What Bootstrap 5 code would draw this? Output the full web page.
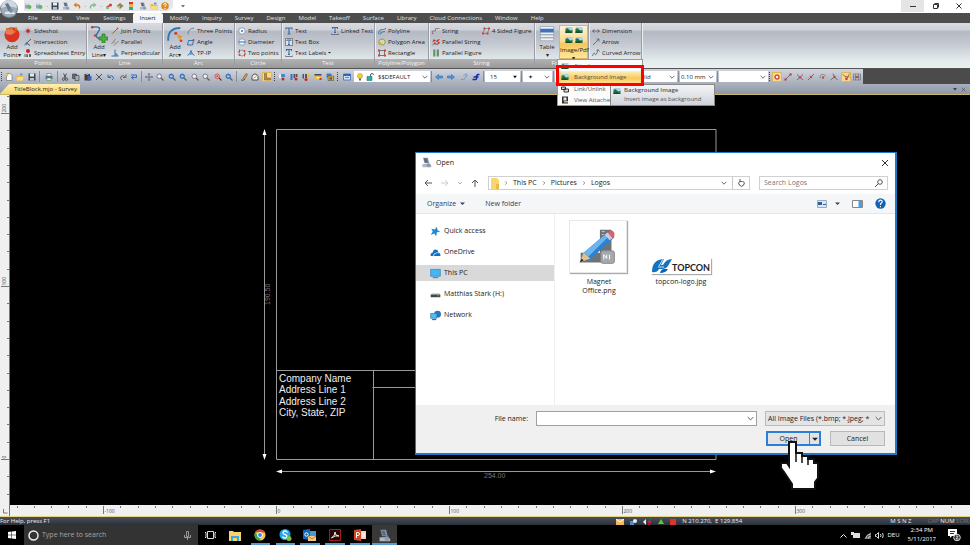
<!DOCTYPE html>
<html lang="en">
<head>
<meta charset="utf-8">
<meta name="viewport" content="width=device-width, initial-scale=1">
<title>TitleBlock.mjo - Survey</title>
<link href="https://cdn.jsdelivr.net/npm/bootstrap@5.3.0/dist/css/bootstrap.min.css" rel="stylesheet">
<style>
:root{--chev:url("data:image/svg+xml,%3Csvg xmlns='http://www.w3.org/2000/svg' viewBox='0 0 10 10'%3E%3Cpath d='M1 3l4 4 4-4' fill='none' stroke='%23555' stroke-width='1.4'/%3E%3C/svg%3E");
--tri:url("data:image/svg+xml,%3Csvg xmlns='http://www.w3.org/2000/svg' viewBox='0 0 10 10'%3E%3Cpath d='M2 3h6l-3 4z' fill='%23000'/%3E%3C/svg%3E")}
body{font-family:"Open Sans","Noto Sans",sans-serif;font-size:6px;line-height:8px;color:#222;background:#000}
svg{display:block;flex:none}
button{border:0;background:none;padding:0;color:inherit;font:inherit}
.ic{width:8px;height:8px}
.ic-md{width:11px;height:11px}
.ic-lg{width:18px;height:18px}
.titlebar{height:13px;background:#fff;padding-left:24px}
.quick{width:149px;height:11px;background:#e4e6ea;border-radius:0 0 6px 0}
.orb{left:0;top:0;width:19px;height:19px;z-index:3}
.winbtn{width:23px;height:12px}
.winbtn.lit{background:#e5e5e5}
.menubar{height:10px;background:#4d4d4d;padding-left:21px}
.menubar a{color:#e2e2e2;padding:0 7px;line-height:10px;text-decoration:none}
.menubar a.on{background:#f4f5f7;color:#222;border-radius:2px 2px 0 0}
.menubar a.on~a{padding-right:6px}
.ribbon{height:46px;background:linear-gradient(#d9dbdf 0,#ced1d8 15%,#b4b9c4 19%,#c3c7cf 45%,#e4eced 85%,#e8f0f0);border-bottom:1px solid #555}
.rgroup{border-right:1px solid #9a9da4;box-shadow:1px 0 #eceeef}
.rbody{height:36px;padding-top:2px}
.rlabel{height:9px;line-height:9px;background:linear-gradient(#b3b3b3,#989898);color:#f5f5f5;text-align:center}
.rgroup button{white-space:nowrap}
.small-cmd{height:11px;gap:2px}
.big-cmd{width:24px}
.pad-l{padding-left:3px}
.w-points{width:87px}.w-line{width:76px}.w-arc{width:72px}.w-circle{width:47px}.w-text{width:93px}.w-poly{width:54px}.w-string{width:106px}.w-format{width:54px}.w-dim{width:53px}
.col-half{width:46px}.col-wide{width:50px}
.img-cmd{width:29px;background:linear-gradient(#fdf3d8,#f9d98e 50%,#f6c65a 55%,#fde79c);border:1px solid #d7b66b}
.img-set{gap:2px;padding:0 4px 2px}
.tools{height:15px;background:#4b4b4b}
.strip{background:linear-gradient(#d0d4db,#bcc2cc 50%,#a7aebb)}
.seg3{width:35px}.seg1{width:15px}.seg7{width:81px}.seg8{width:92px}.seg5{width:60px}.seg4{width:49px}
.vsep{width:1px;height:11px;background:#868c98;margin:0 1px}
.grip{width:1px;height:9px;border-left:1px dotted #444;margin:0 1px}
.hot{background:#fbd78a;outline:1px solid #e2b45c}
.layer-box{padding-left:2px;gap:2px}
.tools .form-select{font-size:6px;line-height:8px;height:11px;min-height:0;border:0;border-radius:0;padding:0 8px 0 5px;background-color:#fff;background-image:var(--chev);background-size:6px 6px;background-position:right 2px center;color:#222;width:auto}
.tools .w-layer{width:54px;padding-left:2px}.tools .w-num{width:35px;background-image:var(--tri)}.tools .w-plus{width:29px}.tools .w-style{width:122px;padding-left:82px}.tools .w-mm{width:36px;padding-left:1px}.tools .w-fill{width:49px}
.tabs{height:11px;background:linear-gradient(#a9b0bc,#8f97a5);border-bottom:1px solid #c8b96a}
.doc-tab{width:80px;height:10px;line-height:10px;background:linear-gradient(#fff0b0,#fdd569);clip-path:polygon(9px 0,100% 0,100% 100%,0 100%);padding-left:14px}
.rule-v{width:10px;background:#f0f0f0;border-right:1px solid #777}
.rule-h{height:11px;background:#f0f0f0}
.status{height:9px;background:linear-gradient(#4a5060,#2b2f38);border-top:1px solid #e3d27c;color:#f0f0f0;line-height:9px;padding-top:1px}
.status-info{gap:6px;margin-right:148px}
.taskbar{height:20px;background:#000;color:#fff;font-size:7px;line-height:9px}
.taskbar .start{width:24px}
.search-box{width:174px;background:#333;padding:0 7px 0 4px;gap:3px}
.search-box input{font-size:7px;line-height:10px;background:none;border:0;padding:0;color:#aaa;min-width:0}
.search-box input::placeholder{color:#a5a5a5;opacity:1}
.apps{width:199px}
.apps button{flex:1;display:flex;align-items:center;justify-content:center;border-bottom:2px solid transparent;border-top:2px solid transparent}
.apps .run{border-image:linear-gradient(90deg,transparent 10%,#5b9bd5 10%,#5b9bd5 90%,transparent 90%) 0 0 2 0}
.apps .cur{background:#383838;border-bottom-color:#5b9bd5}
.tray{gap:4px;padding-right:9px;font-size:6px}
.drop{left:557px;top:59px;width:86px;z-index:5;background:#fbfbfb;border:1px solid #999;padding:0;color:#555}
.drop button{height:11px;width:100%;gap:5px;padding-left:3px;display:flex;align-items:center;white-space:nowrap}
.drop .sel{height:12px;background:linear-gradient(#fdf0c0,#f9c95a 60%,#fde18e)}
.redbox{left:556px;top:65px;width:88px;height:21px;border:3px solid #f00;z-index:7;pointer-events:none}
.tip-box{left:610px;top:84px;width:105px;z-index:6;background:linear-gradient(#f3f4f6,#cfd3dc);border:1px solid #888;color:#555;padding:1px 2px}
.tip-box div{gap:3px;line-height:9px}
.tip-text{padding-left:11px}
.dlg{left:415px;top:57px;width:482px;z-index:4;background:#fff;border:1px solid #1e7ac5;border-right-width:2px;border-bottom-width:2px;font-size:7px;line-height:10px;color:#222}
.dlg-title{height:19px;padding:0 6px 0 5px;gap:4px}
.dlg-nav{height:22px;padding:0 7px 0 8px;gap:9px}
.path-box{height:14px;border:1px solid #d0d0d0;gap:5px;padding-left:2px}
.find-box{width:129px;height:14px;border:1px solid #d0d0d0;padding:0 4px}
.find-box input{border:0;padding:0;min-width:0;background:none}
.find-box input::placeholder{color:#777;opacity:1}
.dlg-cmd{height:20px;background:#f4f6f8;border-bottom:1px solid #e4e6e8;color:#2a4264;padding:0 9px 0 11px}
.dlg-main{height:191px}
.side{width:139px;padding-top:9px;border-right:1px solid #f0f0f0}
.side a{display:flex;align-items:center;height:16px;margin-bottom:5px;padding-left:14px;gap:3px;color:#222;text-decoration:none}
.side a.on{background:#d9d9d9}
.files{padding:6px 0 0 14px;gap:22px}
.file-item{width:60px;text-align:center;line-height:9px;color:#222;text-decoration:none}
.thumb{width:58px;height:53px;border:1px solid #e8e8e8;box-shadow:1px 1px 1px #aaa;margin-bottom:4px}
.thumb-flat{width:60px;height:16px;box-shadow:1px 1px 1px #aaa;margin:38px 0 3px}
.logo-word{font:700 9px/9px Lato,sans-serif;fill:#222}
.dlg-foot{background:#f0f0f0;padding:6px 10px 7px 0;gap:5px}
.dlg-foot .form-control,.dlg-foot .form-select{font-size:7px;line-height:10px;height:15px;min-height:0;border:1px solid #a0a0a0;border-radius:0;padding:0 12px 0 2px;background:#fff var(--chev) no-repeat right 2px center/7px 7px;color:#222}
.dlg-foot .form-control{width:221px}
.dlg-foot .form-select{width:120px;background-color:#e4e4e4;border-color:#bbb}
.foot-btns{gap:9px}
.open-btn{width:55px;height:15px;background:#e4e4e4;border:2px solid #2a80d8}
.open-more{width:10px;border-left:1px solid #777;display:flex;align-items:center;justify-content:center}
.cancel-btn{width:55px;height:15px;background:#e1e1e1;border:1px solid #b8b8b8}
.hand{left:779px;top:345px;width:41px;height:51px;z-index:8}
.cad{font-family:"Liberation Sans",Arial,sans-serif;font-size:10px;fill:#eee}
.cad .dim{font-size:7px;fill:#777}
.tick-label{font-size:5px;fill:#555}
</style>
<script src="https://cdn.jsdelivr.net/npm/bootstrap@5.3.0/dist/js/bootstrap.bundle.min.js"></script>
</head>
<body class="d-flex flex-column vh-100 overflow-hidden position-relative">
<svg width="0" height="0" class="position-absolute" aria-hidden="true">
<symbol id="i-db" viewBox="0 0 16 16"><path d="M2 3h8v10H2z" fill="#8fa6bd"/><ellipse cx="6" cy="4" rx="4" ry="2" fill="#cfe0ee"/><circle cx="11" cy="10" r="4" fill="#5bb85b"/></symbol>
<symbol id="i-save" viewBox="0 0 16 16"><path d="M1 1h14v14H1z" fill="#3c4654"/><path d="M4 1h8v6H4z" fill="#e8edf2"/><path d="M4 10h8v5H4z" fill="#b8c3cf"/></symbol>
<symbol id="i-undo" viewBox="0 0 16 16"><path d="M5 6h4q5 0 4 7" fill="none" stroke="#dd7a1c" stroke-width="3"/><path d="M1 6l6-5v10z" fill="#dd7a1c"/></symbol>
<symbol id="i-redo" viewBox="0 0 16 16"><path d="M11 6H7q-5 0-4 7" fill="none" stroke="#7fc08a" stroke-width="3"/><path d="M15 6L9 1v10z" fill="#7fc08a"/></symbol>
<symbol id="i-pin" viewBox="0 0 16 16"><path d="M2 10l5-4 3 4z" fill="#b53"/><circle cx="11" cy="6" r="3" fill="#d33"/><path d="M2 12h6" stroke="#393" stroke-width="2"/></symbol>
<symbol id="i-diam" viewBox="0 0 16 16"><path d="M8 2l7 6-7 6-7-6z" fill="#6a9a55"/><path d="M8 2l7 6H8z" fill="#d66"/><path d="M1 8h7v6z" fill="#e5b84c"/></symbol>
<symbol id="i-light" viewBox="0 0 16 16"><path d="M4 0h8v5H4z" fill="#d33"/><path d="M4 5h8v5H4z" fill="#e9bd35"/><path d="M4 10h8v6H4z" fill="#3a9"/></symbol>
<symbol id="i-fold" viewBox="0 0 16 16"><path d="M1 4h5l2 2h7v9H1z" fill="#f0b93c"/><path d="M3 8h12l-2 7H1z" fill="#f9dc85"/><path d="M8 1h5v4H8z" fill="#58a0d8"/></symbol>
<symbol id="i-help" viewBox="0 0 16 16"><circle cx="8" cy="8" r="7.5" fill="#e08a12"/><path d="M5.500 6q0-3 2.500-3t2.500 2.500q0 1.500-2.500 3v1.500M8 12v2" stroke="#fff" stroke-width="2" fill="none"/></symbol>
<symbol id="i-helpb" viewBox="0 0 16 16"><circle cx="8" cy="8" r="7.500" fill="#0f62b5"/><path d="M5.500 6q0-3 2.500-3t2.500 2.500q0 1.500-2.500 3v1.500M8 11.500v2" stroke="#fff" stroke-width="1.700" fill="none"/></symbol>
<symbol id="i-scan" viewBox="0 0 16 16"><path d="M3 1h7l2 8H5z" fill="#8294a8"/><path d="M4 2h4l2 6H6z" fill="#5a6b80"/><path d="M2 10h10l3 2v3H2z" fill="#aeb9c6"/><circle cx="11" cy="12" r="3" fill="#8b9cb0"/></symbol>
<symbol id="i-addpt" viewBox="0 0 24 24"><circle cx="12" cy="13" r="10" fill="#d8341f"/><ellipse cx="9" cy="9" rx="6" ry="4" fill="#f0775f"/><path d="M4 4h3v3H4zM10 4h3v3h-3zM16 3h3v4h-3zM13 8h4v2h-4z" fill="#b98a1e"/></symbol>
<symbol id="i-side" viewBox="0 0 16 16"><path d="M8 1v14M1 8h14M3 3l10 10M13 3L3 13" stroke="#a77" stroke-width="1.300"/><circle cx="8" cy="8" r="3.500" fill="#c8202a"/></symbol>
<symbol id="i-inter" viewBox="0 0 16 16"><path d="M1 14L14 2M4 9l8 6" stroke="#3c536e" stroke-width="1.800" fill="none"/><path d="M1 12l5-2 1 4z" fill="#3c78b5"/></symbol>
<symbol id="i-sheet" viewBox="0 0 16 16"><circle cx="8" cy="4" r="4" fill="#c8202a"/><path d="M2 10v6M5 11h2v2H5v2h3M10 11h3v4h-3M10 13h3" stroke="#222" stroke-width="1.300" fill="none"/></symbol>
<symbol id="i-addline" viewBox="0 0 24 24"><path d="M3 3q14-2 8 6t2 9" fill="none" stroke="#33719f" stroke-width="1.800"/><circle cx="3" cy="3" r="1.800" fill="#d33"/><circle cx="7" cy="14" r="1.800" fill="#d33"/><path d="M16 12h4v4h4v4h-4v4h-4v-4h-4v-4h4z" fill="#49b03c" stroke="#2a7a23"/></symbol>
<symbol id="i-join" viewBox="0 0 16 16"><path d="M2 14L14 2" stroke="#476a92" stroke-width="1.800"/><circle cx="3" cy="13" r="2" fill="#e0a030"/><circle cx="13" cy="3" r="2" fill="#d55"/></symbol>
<symbol id="i-para" viewBox="0 0 16 16"><path d="M1 12L9 2M6 15l9-9" stroke="#6a7f98" stroke-width="1.800"/><circle cx="7" cy="9" r="2" fill="#e0a030"/></symbol>
<symbol id="i-perp" viewBox="0 0 16 16"><path d="M1 14h14M8 1v13M8 10h4v4" stroke="#2f62a0" stroke-width="1.800" fill="none"/></symbol>
<symbol id="i-addarc" viewBox="0 0 24 24"><path d="M3 21Q2 4 19 4" fill="none" stroke="#2f78b8" stroke-width="2.500"/><path d="M7 21Q6 8 19 8" fill="none" stroke="#9cc0de"/><circle cx="13" cy="11" r="2" fill="#d33"/><path d="M14 12l8 3-4 5z" fill="#e49a22"/><circle cx="20" cy="21" r="1.800" fill="#d33"/></symbol>
<symbol id="i-arc3" viewBox="0 0 16 16"><path d="M2 15Q2 3 14 2" fill="none" stroke="#667c96" stroke-width="1.800"/></symbol>
<symbol id="i-angle" viewBox="0 0 16 16"><path d="M3 5h10l-2 9H1z" fill="none" stroke="#2467b3" stroke-width="1.800"/><circle cx="13" cy="4" r="2" fill="#d33"/></symbol>
<symbol id="i-tp" viewBox="0 0 16 16"><path d="M1 13Q7 10 8 3q1 7 7 10M5 10h6" fill="none" stroke="#2467b3" stroke-width="1.800"/></symbol>
<symbol id="i-rad" viewBox="0 0 16 16"><circle cx="8" cy="8" r="6.500" fill="#f5f8fb" stroke="#7f8b99" stroke-width="1.500"/><circle cx="8" cy="8" r="2" fill="#347cc4"/></symbol>
<symbol id="i-dia" viewBox="0 0 16 16"><circle cx="8" cy="8" r="6.500" fill="#f5f8fb" stroke="#7f8b99" stroke-width="1.500"/><path d="M1 8h14" stroke="#2467b3" stroke-width="2"/></symbol>
<symbol id="i-two" viewBox="0 0 16 16"><circle cx="8" cy="8" r="6" fill="none" stroke="#888" stroke-width="1.500"/><path d="M3 1v5H0M13 15v-5h3" stroke="#d04040" stroke-width="2" fill="none"/><circle cx="3" cy="12" r="2" fill="#d04040"/><circle cx="13" cy="4" r="2" fill="#d04040"/></symbol>
<symbol id="i-T" viewBox="0 0 16 16"><path d="M2 5V2h12v3M8 2v12M5 14h6" fill="none" stroke="#3a6ba8" stroke-width="2.400"/></symbol>
<symbol id="i-Tb" viewBox="0 0 16 16"><path d="M1 1h14v14H1z" fill="#dce6f0" stroke="#555" stroke-width="1.300"/><path d="M4 6V4h8v2M8 4v9M6 13h4" fill="none" stroke="#3a6ba8" stroke-width="2"/></symbol>
<symbol id="i-Tl" viewBox="0 0 16 16"><path d="M3 4V1h10v3M8 1v10M6 11h4" fill="none" stroke="#3a6ba8" stroke-width="2.200"/><path d="M1 15h14M1 13v2M15 13v2" stroke="#555" stroke-width="1.400"/></symbol>
<symbol id="i-poly" viewBox="0 0 16 16"><path d="M1 14Q2 5 9 5t6-3M4 15q2-6 10-6" fill="none" stroke="#4a83ad" stroke-width="2.200"/></symbol>
<symbol id="i-parea" viewBox="0 0 16 16"><path d="M4 3l7-1 4 6-4 6-7-1-3-5z" fill="#cdddb0" stroke="#7d8f3a" stroke-width="1.500"/><circle cx="4" cy="11" r="3" fill="#e6a52e"/></symbol>
<symbol id="i-rect" viewBox="0 0 16 16"><path d="M3 3h10v10H3z" fill="none" stroke="#555" stroke-width="1.500"/><path d="M0 1h4v4H0zM12 1h4v4h-4zM0 11h4v4H0zM12 11h4v4h-4z" fill="#d04040"/></symbol>
<symbol id="i-str" viewBox="0 0 16 16"><path d="M1 13V8h6V3h8" fill="none" stroke="#777" stroke-width="1.600"/><circle cx="1.500" cy="13" r="1.500" fill="#d55"/></symbol>
<symbol id="i-pstr" viewBox="0 0 16 16"><path d="M1 8q4-6 7-2t7-4M1 14q4-6 7-2t7-4" fill="none" stroke="#444" stroke-width="1.500"/><circle cx="4" cy="5" r="2.200" fill="#d33"/><circle cx="12" cy="5" r="2.200" fill="#d33"/><circle cx="6" cy="11" r="2.200" fill="#d33"/><circle cx="13" cy="10" r="2.200" fill="#d33"/></symbol>
<symbol id="i-pfig" viewBox="0 0 16 16"><path d="M4 1v14M11 1v14" stroke="#4fa03c" stroke-width="3"/><path d="M6 1v14M13 1v14" stroke="#355" stroke-width="1"/></symbol>
<symbol id="i-four" viewBox="0 0 16 16"><path d="M5 3h9l-3 10H2z" fill="none" stroke="#777" stroke-width="1.400"/><path d="M3 1h4v4H3zM12 1h4v4h-4zM0 11h4v4H0zM9 11h4v4H9z" fill="#d04040"/></symbol>
<symbol id="i-table" viewBox="0 0 24 24"><path d="M3 2h18v19H3z" fill="#edf0f4" stroke="#9aa3ae"/><path d="M3 5h18v5H3z" fill="#3c72c0"/><path d="M3 13h18M3 17h18" stroke="#8d959f" stroke-width="1.500"/></symbol>
<symbol id="i-img" viewBox="0 0 16 16"><path d="M1 2h14v12H1z" fill="#a9d4f0"/><path d="M1 6q4-3 7 1t7 0v7H1z" fill="#25733b"/><path d="M1 11l7-1 7 4H1z" fill="#1d4d28"/></symbol>
<symbol id="i-dim" viewBox="0 0 16 16"><path d="M1 8h14M5 5L1 8l4 3M11 5l4 3-4 3" fill="none" stroke="#555" stroke-width="1.500"/></symbol>
<symbol id="i-arrow" viewBox="0 0 16 16"><path d="M2 14L14 2M9 2h5v5" fill="none" stroke="#4d5868" stroke-width="1.500"/></symbol>
<symbol id="i-carrow" viewBox="0 0 16 16"><path d="M1 14q3-9 5-4t6-8M9 4l3-3 3 4" fill="none" stroke="#4d5868" stroke-width="1.500"/></symbol>
<symbol id="i-new" viewBox="0 0 16 16"><path d="M3 1h7l4 4v10H3z" fill="#fff" stroke="#667" stroke-width="1.300"/><circle cx="4" cy="4" r="3" fill="#f0c040"/></symbol>
<symbol id="i-print" viewBox="0 0 16 16"><path d="M4 1h8v5H4z" fill="#fff" stroke="#556"/><path d="M1 6h14v6H1z" fill="#5c7690"/><path d="M4 10h8v5H4z" fill="#dff0df" stroke="#484"/></symbol>
<symbol id="i-cut" viewBox="0 0 16 16"><path d="M5 1l5 9M11 1L6 10" stroke="#333" stroke-width="1.600"/><circle cx="5" cy="12.500" r="2.300" fill="none" stroke="#333" stroke-width="1.500"/><circle cx="11" cy="12.500" r="2.300" fill="none" stroke="#333" stroke-width="1.500"/></symbol>
<symbol id="i-copy" viewBox="0 0 16 16"><path d="M1 2h8v9H1z" fill="#6c7178" stroke="#222"/><path d="M6 5h8v10H6z" fill="#a7adb4" stroke="#222"/></symbol>
<symbol id="i-paste" viewBox="0 0 16 16"><path d="M1 2h11v13H1z" fill="#4a3c20"/><path d="M4 1h5v3H4z" fill="#999"/><path d="M7 6h8v9H7z" fill="#3c62b4"/></symbol>
<symbol id="i-x" viewBox="0 0 16 16"><path d="M2 2l12 12M14 2L2 14" stroke="#333" stroke-width="1.600"/></symbol>
<symbol id="i-un2" viewBox="0 0 16 16"><path d="M2 3v6h6M3 8q4-5 9-1 3 4-2 7" fill="none" stroke="#2c6fc7" stroke-width="2"/></symbol>
<symbol id="i-re2" viewBox="0 0 16 16"><path d="M14 3v6H8M13 8Q9 3 4 7q-3 4 2 7" fill="none" stroke="#666" stroke-width="2"/></symbol>
<symbol id="i-re3" viewBox="0 0 16 16"><path d="M2 4h11v5H3M3 9l4-3M3 9l4 4" fill="none" stroke="#2c6fc7" stroke-width="2"/></symbol>
<symbol id="i-pan" viewBox="0 0 16 16"><path d="M8 1v14M1 8h14M6 3l2-2 2 2M6 13l2 2 2-2M3 6L1 8l2 2M13 6l2 2-2 2" fill="none" stroke="#556" stroke-width="1.400"/></symbol>
<symbol id="i-zoom" viewBox="0 0 16 16"><circle cx="6.500" cy="6.500" r="4.500" fill="#e8f0f8" stroke="#667" stroke-width="1.600"/><path d="M10 10l5 5" stroke="#8a4a28" stroke-width="2.200"/></symbol>
<symbol id="i-zoomb" viewBox="0 0 16 16"><circle cx="6.500" cy="6.500" r="4.500" fill="#4d91dd" stroke="#2a5faa" stroke-width="1.600"/><path d="M4 6.500h5" stroke="#fff" stroke-width="1.500"/><path d="M10 10l5 5" stroke="#555" stroke-width="2.200"/></symbol>
<symbol id="i-zoomr" viewBox="0 0 16 16"><circle cx="6.500" cy="6.500" r="4.500" fill="#f7dcd8" stroke="#b33" stroke-width="1.600"/><path d="M4 6.500h5M6.500 4v5" stroke="#c22" stroke-width="1.500"/><path d="M10 10l5 5" stroke="#8a2a28" stroke-width="2.200"/></symbol>
<symbol id="i-pen" viewBox="0 0 16 16"><path d="M2 14q5 2 8-2" fill="none" stroke="#333" stroke-width="1.500"/><path d="M6 11L12 1l3 2-6 10z" fill="#e4ad3f" stroke="#333"/></symbol>
<symbol id="i-gauge" viewBox="0 0 16 16"><path d="M2 14V7q2-6 8-5l4 5v7z" fill="#f2f2ee" stroke="#333" stroke-width="1.600"/><path d="M5 11l6-5" stroke="#b80" stroke-width="1.600"/></symbol>
<symbol id="i-elbow" viewBox="0 0 16 16"><path d="M3 1h4v9h8v4H3z" fill="#c98a22" stroke="#664" stroke-width="1.200"/></symbol>
<symbol id="i-pts" viewBox="0 0 16 16"><path d="M2 2h12v6H2z" fill="#4b86cf"/><path d="M2 2h4v8H2z" fill="#e6edf6"/><circle cx="10" cy="12" r="3" fill="#c22"/></symbol>
<symbol id="i-pts2" viewBox="0 0 16 16"><path d="M1 2h4v12H1z" fill="#3f72bd"/><path d="M7 2h3v8H7zM11 2h4v6h-4z" fill="#50565f"/><circle cx="12" cy="12" r="3" fill="#c22"/></symbol>
<symbol id="i-pts3" viewBox="0 0 16 16"><path d="M1 2h3v9H1zM6 2h4v8H6z" fill="#50565f"/><path d="M12 2h3v6h-3z" fill="#e5b93a"/><circle cx="8" cy="13" r="3" fill="#c22"/></symbol>
<symbol id="i-yel" viewBox="0 0 16 16"><path d="M1 2h14v12H1z" fill="#e5b93a"/><path d="M1 2h14v3H1z" fill="#3a4c66"/><path d="M5 8h6v3H5z" fill="#fff0a8"/><path d="M11 10h4v4h-4z" fill="#c33"/></symbol>
<symbol id="i-view" viewBox="0 0 16 16"><path d="M2 1h12v14H2z" fill="#333"/><path d="M5 3h6v6H5z" fill="#dfe6ee"/><path d="M6 10h8v3H6z" fill="#e5b93a"/></symbol>
<symbol id="i-layers" viewBox="0 0 16 16"><path d="M1 1h10v8H1z" fill="#3f7fd0"/><path d="M4 6h11v9H4z" fill="#e5a93a" stroke="#345"/><path d="M7 9h5v4H7z" fill="#356"/></symbol>
<symbol id="i-win" viewBox="0 0 16 16"><path d="M1 2h14v12H1z" fill="#cfe3fa" stroke="#2f66b5" stroke-width="1.500"/><path d="M1 2h14v4H1z" fill="#2f66b5"/><path d="M4 9h8" stroke="#2f66b5" stroke-width="1.500"/></symbol>
<symbol id="i-bulb" viewBox="0 0 16 16"><circle cx="8" cy="6" r="5" fill="#f3d328" stroke="#a98a10"/><path d="M6 11h4v4H6z" fill="#666"/></symbol>
<symbol id="i-lock" viewBox="0 0 16 16"><path d="M9 8V4q0-3 3-3t3 3" fill="none" stroke="#444" stroke-width="1.700"/><path d="M2 7h10v8H2z" fill="#21b3b3" stroke="#166"/></symbol>
<symbol id="i-left" viewBox="0 0 16 16"><path d="M1 8l6-5v3h8v4H7v3z" fill="#4b9be0" stroke="#245d9c"/></symbol>
<symbol id="i-right" viewBox="0 0 16 16"><path d="M15 8L9 3v3H1v4h8v3z" fill="#4b9be0" stroke="#245d9c"/></symbol>
<symbol id="i-dots" viewBox="0 0 16 16"><path d="M2 13q9 1 10-8M8 5l4-4 3 5" fill="none" stroke="#4b84c0" stroke-width="2" stroke-dasharray="2 1"/></symbol>
<symbol id="i-wave" viewBox="0 0 16 16"><path d="M1 13h6q3 0 2-4T12 3h3M3 8h10" fill="none" stroke="#1429b8" stroke-width="2.800"/></symbol>
<symbol id="i-sn1" viewBox="0 0 16 16"><circle cx="8" cy="8" r="4" fill="#fff" stroke="#c33" stroke-width="2.500"/></symbol>
<symbol id="i-sn2" viewBox="0 0 16 16"><path d="M3 13L13 3" stroke="#555" stroke-width="1.500"/><circle cx="3" cy="13" r="2.500" fill="#c44"/><circle cx="13" cy="3" r="2.500" fill="#c44"/></symbol>
<symbol id="i-sn3" viewBox="0 0 16 16"><path d="M2 3l12 11M14 3L2 14" stroke="#555" stroke-width="1.500"/><circle cx="8" cy="8.500" r="2.500" fill="#c44"/></symbol>
<symbol id="i-sn4" viewBox="0 0 16 16"><path d="M2 14L14 2" stroke="#555" stroke-width="1.500"/><circle cx="8" cy="8" r="2.500" fill="#c44"/></symbol>
<symbol id="i-sn5" viewBox="0 0 16 16"><path d="M2 11Q1 2 9 3l5 3" fill="none" stroke="#777" stroke-width="1.500"/><circle cx="8" cy="9" r="2.500" fill="#c44"/></symbol>
<symbol id="i-sn6" viewBox="0 0 16 16"><path d="M6 1l3 7 6 6M9 8l-8 6" fill="none" stroke="#555" stroke-width="1.500"/><circle cx="9" cy="8" r="2.500" fill="#c44"/></symbol>
<symbol id="i-sn7" viewBox="0 0 16 16"><path d="M1 3l6 4 2 6 6-12M7 7l8 1" fill="none" stroke="#755" stroke-width="1.500"/><circle cx="9" cy="12" r="2.500" fill="#c44"/></symbol>
<symbol id="i-grid" viewBox="0 0 16 16"><path d="M1 2h14v12H1zM1 8h14M5 2v12M11 2v12" fill="none" stroke="#666" stroke-width="1.200"/><circle cx="8" cy="8" r="2.500" fill="#c44"/></symbol>
<symbol id="i-link" viewBox="0 0 16 16"><path d="M1 4h8v5H1zM6 8h9v6H6z" fill="#ddd" stroke="#222" stroke-width="1.800"/></symbol>
<symbol id="i-star" viewBox="0 0 16 16"><path d="M10 1l1 5 4 2-5 1-1 6-3-4-5 2 3-5-2-4 5 1z" fill="#1e88d8"/></symbol>
<symbol id="i-cloud" viewBox="0 0 16 16"><path d="M1 13q-1-4 3-5Q5 2 9 4q3 0 3 4 4 1 3 5z" fill="#0f6fc6"/><path d="M5 13q0-4 4-4 2-2 4 0" fill="none" stroke="#fff" stroke-width="1"/></symbol>
<symbol id="i-pc" viewBox="0 0 16 16"><path d="M1 2h14v10H1z" fill="#47b4f5" stroke="#2a82bd"/><path d="M4 14h8" stroke="#678" stroke-width="1.500"/></symbol>
<symbol id="i-drive" viewBox="0 0 16 16"><path d="M1 8l2-2h10l2 2z" fill="#c5c8ca"/><path d="M1 8h14v4H1z" fill="#444"/><path d="M11 9.500h2v1h-2z" fill="#6f6"/></symbol>
<symbol id="i-net" viewBox="0 0 16 16"><circle cx="11" cy="6" r="5" fill="#2b77b8"/><path d="M1 5h9v7H1z" fill="#53bdf5" stroke="#2377ad"/><path d="M3 14h6" stroke="#456" stroke-width="1.500"/></symbol>
<symbol id="i-chev" viewBox="0 0 10 10"><path d="M1 3l4 4 4-4" fill="none" stroke="#555" stroke-width="1.500"/></symbol>
<symbol id="i-caret" viewBox="0 0 10 10"><path d="M0 3h10L5 8z" fill="currentColor"/></symbol>
<symbol id="i-gt" viewBox="0 0 10 10"><path d="M3 1l4 4-4 4" fill="none" stroke="#444" stroke-width="1.500"/></symbol>
</svg>

<header>
<div class="titlebar d-flex align-items-start justify-content-between">
 <div class="quick d-flex align-items-center justify-content-between pe-1">
  <svg class="ic"><use href="#i-db"/></svg><svg class="ic"><use href="#i-db"/></svg><span>·</span><svg class="ic"><use href="#i-save"/></svg><svg class="ic"><use href="#i-scan"/></svg><svg class="ic"><use href="#i-undo"/></svg><span>·</span><svg class="ic"><use href="#i-redo"/></svg><span>·</span><svg class="ic"><use href="#i-pin"/></svg><svg class="ic"><use href="#i-diam"/></svg><svg class="ic"><use href="#i-light"/></svg><svg class="ic"><use href="#i-scan"/></svg><svg class="ic"><use href="#i-fold"/></svg><svg class="ic"><use href="#i-help"/></svg>
 </div>
 <svg class="ms-2 mt-1" width="4" height="4" color="#555"><use href="#i-caret"/></svg>
 <div class="d-flex ms-auto">
  <button class="winbtn lit" aria-label="Minimize"><svg class="m-auto" width="6" height="6"><path d="M0 3.500h6" stroke="#333"/></svg></button>
  <button class="winbtn" aria-label="Restore"><svg class="m-auto" width="6" height="6"><path d="M.5 1.500h4v4h-4zM1.500 .500h4v4" fill="none" stroke="#333"/></svg></button>
  <button class="winbtn" aria-label="Close"><svg class="m-auto" width="6" height="6"><path d="M.5.5l5 5M5.500.5l-5 5" stroke="#333"/></svg></button>
 </div>
</div>
<svg class="orb position-absolute" viewBox="0 0 19 19"><circle cx="9" cy="9" r="9" fill="#76818e"/><circle cx="9" cy="9" r="8" fill="#9eabb9"/><path d="M1 8a8 8 0 0 1 16 0Q9 5 1 8z" fill="#cfd8e0"/><path d="M5 4l3-1 4 7-3 2z" fill="#65758a"/><path d="M5 12l6-1 4 2v1H5z" fill="#e1e7ed"/><path d="M10 8l3 2-1 3-3-1z" fill="#7b8fa8"/></svg>
<nav class="menubar d-flex">
 <a href="#">File</a><a href="#">Edit</a><a href="#">View</a><a href="#">Settings</a><a href="#" class="on">Insert</a><a href="#">Modify</a><a href="#">Inquiry</a><a href="#">Survey</a><a href="#">Design</a><a href="#">Model</a><a href="#">Takeoff</a><a href="#">Surface</a><a href="#">Library</a><a href="#">Cloud Connections</a><a href="#">Window</a><a href="#">Help</a>
</nav>
<div class="ribbon d-flex">
 <section class="rgroup w-points"><div class="rbody d-flex">
  <button class="big-cmd"><svg class="ic-lg mx-auto"><use href="#i-addpt"/></svg>Add<br>Point▾</button>
  <div><button class="small-cmd d-flex align-items-center"><svg class="ic"><use href="#i-side"/></svg>Sideshot</button><button class="small-cmd d-flex align-items-center"><svg class="ic"><use href="#i-inter"/></svg>Intersection</button><button class="small-cmd d-flex align-items-center"><svg class="ic"><use href="#i-sheet"/></svg>Spreadsheet Entry</button></div>
 </div><div class="rlabel">Points</div></section>
 <section class="rgroup w-line"><div class="rbody d-flex">
  <button class="big-cmd"><svg class="ic-lg mx-auto"><use href="#i-addline"/></svg>Add<br>Line▾</button>
  <div><button class="small-cmd d-flex align-items-center"><svg class="ic"><use href="#i-join"/></svg>Join Points</button><button class="small-cmd d-flex align-items-center"><svg class="ic"><use href="#i-para"/></svg>Parallel</button><button class="small-cmd d-flex align-items-center"><svg class="ic"><use href="#i-perp"/></svg>Perpendicular</button></div>
 </div><div class="rlabel">Line</div></section>
 <section class="rgroup w-arc"><div class="rbody d-flex">
  <button class="big-cmd"><svg class="ic-lg mx-auto"><use href="#i-addarc"/></svg>Add<br>Arc▾</button>
  <div><button class="small-cmd d-flex align-items-center"><svg class="ic"><use href="#i-arc3"/></svg>Three Points</button><button class="small-cmd d-flex align-items-center"><svg class="ic"><use href="#i-angle"/></svg>Angle</button><button class="small-cmd d-flex align-items-center"><svg class="ic"><use href="#i-tp"/></svg>TP-IP</button></div>
 </div><div class="rlabel">Arc</div></section>
 <section class="rgroup w-circle"><div class="rbody pad-l">
  <button class="small-cmd d-flex align-items-center"><svg class="ic"><use href="#i-rad"/></svg>Radius</button><button class="small-cmd d-flex align-items-center"><svg class="ic"><use href="#i-dia"/></svg>Diameter</button><button class="small-cmd d-flex align-items-center"><svg class="ic"><use href="#i-two"/></svg>Two points</button>
 </div><div class="rlabel">Circle</div></section>
 <section class="rgroup w-text"><div class="rbody pad-l d-flex">
  <div class="col-half"><button class="small-cmd d-flex align-items-center"><svg class="ic"><use href="#i-T"/></svg>Text</button><button class="small-cmd d-flex align-items-center"><svg class="ic"><use href="#i-Tb"/></svg>Text Box</button><button class="small-cmd d-flex align-items-center"><svg class="ic"><use href="#i-Tl"/></svg>Text Labels <svg width="3" height="3"><use href="#i-caret"/></svg></button></div>
  <div><button class="small-cmd d-flex align-items-center"><svg class="ic"><use href="#i-Tl"/></svg>Linked Text</button></div>
 </div><div class="rlabel">Text</div></section>
 <section class="rgroup w-poly"><div class="rbody pad-l">
  <button class="small-cmd d-flex align-items-center"><svg class="ic"><use href="#i-poly"/></svg>Polyline</button><button class="small-cmd d-flex align-items-center"><svg class="ic"><use href="#i-parea"/></svg>Polygon Area</button><button class="small-cmd d-flex align-items-center"><svg class="ic"><use href="#i-rect"/></svg>Rectangle</button>
 </div><div class="rlabel">Polyline/Polygon</div></section>
 <section class="rgroup w-string"><div class="rbody pad-l d-flex">
  <div class="col-wide"><button class="small-cmd d-flex align-items-center"><svg class="ic"><use href="#i-str"/></svg>String</button><button class="small-cmd d-flex align-items-center"><svg class="ic"><use href="#i-pstr"/></svg>Parallel String</button><button class="small-cmd d-flex align-items-center"><svg class="ic"><use href="#i-pfig"/></svg>Parallel Figure</button></div>
  <div><button class="small-cmd d-flex align-items-center"><svg class="ic"><use href="#i-four"/></svg>4 Sided Figure</button></div>
 </div><div class="rlabel">String</div></section>
 <section class="rgroup w-format"><div class="rbody d-flex">
  <button class="big-cmd"><svg class="ic-lg mx-auto"><use href="#i-table"/></svg>Table<br>▾</button>
  <button class="img-cmd"><span class="img-set d-flex flex-wrap justify-content-center"><svg class="ic"><use href="#i-img"/></svg><svg class="ic"><use href="#i-img"/></svg><svg class="ic"><use href="#i-img"/></svg><svg class="ic"><use href="#i-img"/></svg></span>Image/Pdf<br>▾</button>
 </div><div class="rlabel">Format</div></section>
 <section class="rgroup w-dim"><div class="rbody pad-l">
  <button class="small-cmd d-flex align-items-center"><svg class="ic"><use href="#i-dim"/></svg>Dimension</button><button class="small-cmd d-flex align-items-center"><svg class="ic"><use href="#i-arrow"/></svg>Arrow</button><button class="small-cmd d-flex align-items-center"><svg class="ic"><use href="#i-carrow"/></svg>Curved Arrow</button>
 </div></section>
</div>
<div class="tools d-flex"><div class="strip d-flex align-items-center">
 <span class="grip"></span>
 <div class="seg3 d-flex justify-content-around"><svg class="ic"><use href="#i-new"/></svg><svg class="ic"><use href="#i-fold"/></svg><svg class="ic"><use href="#i-save"/></svg></div><span class="vsep"></span>
 <div class="seg1 d-flex justify-content-around"><svg class="ic"><use href="#i-print"/></svg></div><span class="vsep"></span>
 <div class="seg7 d-flex justify-content-around"><svg class="ic"><use href="#i-cut"/></svg><svg class="ic"><use href="#i-copy"/></svg><svg class="ic"><use href="#i-paste"/></svg><svg class="ic"><use href="#i-x"/></svg><svg class="ic"><use href="#i-un2"/></svg><svg class="ic"><use href="#i-re2"/></svg><svg class="ic"><use href="#i-re3"/></svg></div><span class="vsep"></span>
 <div class="seg8 d-flex justify-content-around"><svg class="ic"><use href="#i-pan"/></svg><svg class="ic"><use href="#i-zoom"/></svg><svg class="ic"><use href="#i-zoomb"/></svg><svg class="ic"><use href="#i-zoomb"/></svg><svg class="ic"><use href="#i-zoom"/></svg><svg class="ic"><use href="#i-zoom"/></svg><svg class="ic"><use href="#i-zoomr"/></svg><svg class="ic"><use href="#i-zoomb"/></svg></div><span class="vsep"></span>
 <div class="seg3 d-flex justify-content-around"><svg class="ic"><use href="#i-pen"/></svg><svg class="ic"><use href="#i-gauge"/></svg><svg class="ic hot"><use href="#i-elbow"/></svg></div><span class="grip"></span>
 <div class="seg5 d-flex justify-content-around"><svg class="ic"><use href="#i-pts"/></svg><svg class="ic"><use href="#i-pts2"/></svg><svg class="ic"><use href="#i-pts3"/></svg><svg class="ic"><use href="#i-yel"/></svg><svg class="ic"><use href="#i-layers"/></svg></div><span class="grip"></span>
 <div class="seg1 d-flex justify-content-around"><svg class="ic"><use href="#i-win"/></svg></div>
 <div class="layer-box d-flex align-items-center bg-white"><svg class="ic"><use href="#i-bulb"/></svg><svg class="ic"><use href="#i-lock"/></svg><select class="form-select w-layer" aria-label="Layer"><option>$$DEFAULT</option></select></div><span class="vsep"></span>
 <div class="seg4 d-flex justify-content-around"><svg class="ic"><use href="#i-left"/></svg><svg class="ic"><use href="#i-right"/></svg><svg class="ic"><use href="#i-dots"/></svg><svg class="ic"><use href="#i-wave"/></svg></div><span class="vsep"></span>
 <select class="form-select w-num" aria-label="Text size"><option>15</option></select><span class="vsep"></span>
 <select class="form-select w-plus" aria-label="Point symbol"><option>✦</option></select><span class="vsep"></span>
 <select class="form-select w-style" aria-label="Line style"><option>Solid</option></select><span class="vsep"></span>
 <select class="form-select w-mm" aria-label="Line width"><option>0.10 mm</option></select><span class="vsep"></span>
 <select class="form-select w-fill" aria-label="Fill"><option></option></select><span class="grip"></span>
 <div class="seg8 d-flex justify-content-around"><svg class="ic hot"><use href="#i-sn1"/></svg><svg class="ic"><use href="#i-sn2"/></svg><svg class="ic"><use href="#i-sn3"/></svg><svg class="ic"><use href="#i-sn4"/></svg><svg class="ic"><use href="#i-sn5"/></svg><svg class="ic"><use href="#i-sn6"/></svg><svg class="ic hot"><use href="#i-sn7"/></svg><svg class="ic"><use href="#i-grid"/></svg></div>
</div></div>
<div class="tabs d-flex justify-content-between align-items-center"><div class="doc-tab">TitleBlock.mjo - Survey</div><div class="d-flex gap-1 pe-1"><svg width="4" height="4"><use href="#i-caret"/></svg><svg width="5" height="5"><use href="#i-x"/></svg></div></div>
</header>

<div class="drop position-absolute"><button><svg class="ic"><use href="#i-img"/></svg>Attach</button><button class="sel"><svg class="ic"><use href="#i-img"/></svg>Background Image</button><button><svg class="ic"><use href="#i-link"/></svg>Link/Unlink</button><button><svg class="ic"><use href="#i-view"/></svg>View Attached</button></div>
<div class="redbox position-absolute"></div>
<div class="tip-box position-absolute" role="tooltip"><div class="d-flex fw-semibold align-items-center"><svg class="ic"><use href="#i-img"/></svg>Background Image</div><div class="tip-text">Insert image as background</div></div>

<main class="flex-grow-1 d-flex position-relative overflow-hidden">
 <svg class="rule-v h-100" id="ruleV"></svg>
 <svg class="flex-grow-1 h-100 cad" aria-label="Title block drawing">
  <g fill="none" stroke="#999"><path d="M266.500 34.500h439.500v330h-439.500zM266.500 275.500h439M363.500 275v89M362.500 292.500h343"/><path d="M254.500 36v327M268 376.500h436"/></g>
  <path d="M254.500 34l2 6h-4zM254.500 365l2-6h-4zM266 376.500l6-2v4zM706 376.500l-6-2v4z" fill="#fff"/>
  <text x="269" y="287">Company Name</text><text x="269" y="298">Address Line 1</text><text x="269" y="310">Address Line 2</text><text x="269" y="321">City, State, ZIP</text>
  <text class="dim" transform="translate(260 210) rotate(-90)">190.50</text><text class="dim" x="474" y="383">254.00</text>
 </svg>

 <section class="dlg position-absolute" role="dialog" aria-label="Open">
  <div class="dlg-title d-flex align-items-center"><svg class="ic-md"><use href="#i-scan"/></svg><span>Open</span><button class="ms-auto" aria-label="Close"><svg width="8" height="8"><path d="M1 1l6 6M7 1L1 7" stroke="#333"/></svg></button></div>
  <div class="dlg-nav d-flex align-items-center">
   <svg width="8" height="8" viewBox="0 0 8 8"><path d="M8 4H1M4 1L1 4l3 3" fill="none" stroke="#555"/></svg>
   <svg width="8" height="8" viewBox="0 0 8 8"><path d="M0 4h7M4 1l3 3-3 3" fill="none" stroke="#ccc"/></svg>
   <svg width="4" height="4"><use href="#i-chev"/></svg>
   <svg class="me-n1" width="8" height="8" viewBox="0 0 8 8"><path d="M4 8V1M1 4l3-3 3 3" fill="none" stroke="#555"/></svg>
   <div class="path-box d-flex align-items-center flex-grow-1"><svg width="8" height="11" viewBox="0 0 8 11"><path d="M0 0h6l2 2v9H0z" fill="#f7d774"/><path d="M5 6h3v5H5z" fill="#e8bb45"/></svg><svg width="4" height="4"><use href="#i-gt"/></svg>This PC<svg width="4" height="4"><use href="#i-gt"/></svg>Pictures<svg width="4" height="4"><use href="#i-gt"/></svg>Logos<svg class="ms-auto" width="6" height="6"><use href="#i-chev"/></svg><span class="vr"></span><svg class="me-1" width="7" height="8" viewBox="0 0 7 8"><path d="M5 2.200A2.700 2.700 0 1 1 2 2.200M2 0v2.500H4.500" fill="none" stroke="#555"/></svg></div>
   <div class="find-box d-flex align-items-center"><input class="flex-grow-1" type="text" placeholder="Search Logos" aria-label="Search Logos"><svg width="8" height="8" viewBox="0 0 8 8"><circle cx="5" cy="3" r="2.300" fill="none" stroke="#555"/><path d="M3.500 4.500L0 8" stroke="#555"/></svg></div>
  </div>
  <div class="dlg-cmd d-flex align-items-center"><button class="d-flex align-items-center gap-1">Organize <svg width="5" height="5"><use href="#i-caret"/></svg></button><button class="ms-3 ps-1">New folder</button>
   <div class="ms-auto d-flex align-items-center gap-2"><svg width="10" height="8" viewBox="0 0 10 8"><path d="M.5.5h9v7h-9z" fill="#d8e8f5" stroke="#9ab"/><path d="M1 2h4v3H1zM6 4h3v1H6z" fill="#2a60a5"/></svg><svg width="5" height="5"><use href="#i-caret"/></svg><svg class="ms-1 me-1" width="11" height="8" viewBox="0 0 11 8"><path d="M.5.5h10v7H.5z" fill="#fff" stroke="#888"/><path d="M6.500 1H10v6H6.500z" fill="#4a9fe0"/></svg><svg class="ic-md"><use href="#i-helpb"/></svg></div></div>
  <div class="dlg-main d-flex">
   <nav class="side"><a href="#"><svg class="ic-md"><use href="#i-star"/></svg>Quick access</a><a href="#"><svg class="ic-md"><use href="#i-cloud"/></svg>OneDrive</a><a href="#" class="on"><svg class="ic-md"><use href="#i-pc"/></svg>This PC</a><a href="#"><svg class="ic-md"><use href="#i-drive"/></svg>Matthias Stark (H:)</a><a href="#"><svg class="ic-md"><use href="#i-net"/></svg>Network</a></nav>
   <div class="files d-flex align-items-start">
    <a href="#" class="file-item"><svg class="thumb" viewBox="0 0 58 53"><path d="M31 9h12v34H11V33h20z" fill="#6e7378"/><path d="M33 11h3M33 14h2M33 17h3" stroke="#ccc"/><path d="M10 43l4-10 26-22 6 6-24 22z" fill="#2a82d4"/><path d="M14 33L38 13l3 2-22 22z" fill="#6db5ee"/><path d="M38 13l4-3q5 0 4 6l-3 3z" fill="#d9636a"/><path d="M36 14l3-2 5 6-3 2z" fill="#ccd"/><path d="M10 43l4-10 7 6z" fill="#e5c08a"/><path d="M10 43l2-4 2 2z" fill="#222"/><rect x="32" y="31" width="14" height="13" rx="2" fill="#a5a9ad" stroke="#888"/><path d="M35 40v-5l3 4v-4M41 35v5" stroke="#fff" fill="none"/></svg>Magnet<br>Office.png</a>
    <a href="#" class="file-item"><svg class="thumb-flat" viewBox="0 0 60 16"><path d="M1 14Q1 2 12 1h1l-3 6h2q3-6 9-6l-4 7q-2 3-6 3H8q-2 4-7 3z" fill="#1273c4"/><path d="M9 15q1-4 4-4h4q-2 4-8 4z" fill="#0e62ad"/><path d="M7 9h6M12 1L8 8" stroke="#fff" stroke-width=".8"/><text x="21" y="13" class="logo-word">TOPCON</text></svg>topcon-logo.jpg</a>
   </div>
  </div>
  <div class="dlg-foot d-flex flex-column align-items-end">
   <div class="d-flex align-items-center gap-2"><label for="fname" class="me-n1">File name:</label><input id="fname" class="form-control" type="text"><select class="form-select" aria-label="File type"><option>All Image Files (*.bmp; *.jpeg; *</option></select></div>
   <div class="foot-btns d-flex"><div class="open-btn d-flex"><button class="flex-grow-1">Open</button><button class="open-more" aria-label="Open options"><svg width="6" height="6"><use href="#i-caret"/></svg></button></div><button class="cancel-btn">Cancel</button></div>
  </div>
 </section>
 <svg class="hand position-absolute" viewBox="0 0 41 51"><path d="M10 2h7v11h6v3h6v3h6v4h4v15l-3 4v7H13v-5l-4-6-4-6-3-4v-5h6l2 3z" fill="#fff" stroke="#111" stroke-width="2"/><path d="M17 13v9M23 16v7M29 19v6" stroke="#111" stroke-width="1.500"/></svg>
</main>
<svg class="rule-h w-100" id="ruleH"></svg>
<footer>
 <div class="status d-flex align-items-center"><span class="me-auto">For Help, press F1</span>
  <div class="status-info d-flex align-items-center"><svg width="8" height="6" viewBox="0 0 8 6"><path d="M0 0h8v6H0z" fill="#f0b860"/><path d="M0 0l4 3 4-3" fill="none" stroke="#fff"/></svg><svg width="7" height="6" viewBox="0 0 7 6"><path d="M0 2h4v4H0z" fill="#4b90d5"/><circle cx="5" cy="2" r="2" fill="#eee"/></svg><svg width="9" height="6" viewBox="0 0 9 6"><path d="M0 3l3-3v6z" fill="#eee"/><path d="M8 0L5 3h3L5 6" stroke="#e22" fill="none"/></svg><svg width="6" height="5" viewBox="0 0 6 5"><path d="M0 5l3-5 3 5z" fill="#5c3"/></svg><svg width="6" height="6"><path d="M0 0h6v6H0z" fill="#d33"/></svg><span>N 210.270, &nbsp;E 129.854</span></div>
  <div class="d-flex gap-3 text-nowrap"><span>M S N Z</span><span><span class="text-secondary">CAP</span> NUM <span class="text-secondary">SCRL</span></span></div>
 </div>
 <div class="taskbar d-flex">
  <button class="start" aria-label="Start"><svg class="m-auto" width="8" height="8" viewBox="0 0 8 8"><path d="M0 1l3.500-.5v3.300H0zM4 .4L8 0v3.800H4zM0 4.200h3.500v3.300L0 7zM4 4.200h4V8l-4-.5z" fill="#fff"/></svg></button>
  <div class="search-box d-flex align-items-center"><svg width="11" height="11" viewBox="0 0 11 11"><circle cx="5.500" cy="5.500" r="4.500" fill="none" stroke="#eee" stroke-width="1.500"/></svg><input class="flex-grow-1" type="text" placeholder="Type here to search" aria-label="Type here to search"><svg width="7" height="9" viewBox="0 0 7 9"><path d="M2.500.5h2v5h-2zM.5 4v2.500h6V4M3.500 7v2" fill="none" stroke="#999"/></svg></div>
  <div class="apps d-flex">
   <button aria-label="Task view"><svg width="11" height="8" viewBox="0 0 11 8"><path d="M2.500.5h6v7h-6zM0 1.500h1v5H0M11 1.500h-1v5h1" fill="none" stroke="#ddd"/></svg></button>
   <button aria-label="File Explorer"><svg width="12" height="11" viewBox="0 0 12 11"><path d="M0 1h4l1 1h7v9H0z" fill="#f9d568"/><path d="M2 6h8v5H8V8H4v3H2z" fill="#3fa7e0"/></svg></button>
   <button class="run" aria-label="Chrome"><svg width="12" height="12" viewBox="0 0 12 12"><circle cx="6" cy="6" r="5.500" fill="#f7c92f"/><path d="M1.200 3.300A5.500 5.500 0 0 1 11 3.500H6z" fill="#df4634"/><path d="M1.200 3.300A5.500 5.500 0 0 0 5.500 11.500L7 8 4 7z" fill="#35a653"/><circle cx="6" cy="6" r="2.500" fill="#4285f4" stroke="#fff"/></svg></button>
   <button class="run" aria-label="Skype"><svg width="13" height="12" viewBox="0 0 13 12"><circle cx="6" cy="5.500" r="5.500" fill="#1fa9ea"/><path d="M8.500 3.500Q7.500 2 6 2T4 3.700Q4 5 6 5.500T8 7.300Q8 9 6 9T3.500 7.500" fill="none" stroke="#fff" stroke-width="1.300"/><circle cx="10" cy="9.500" r="2.500" fill="#7fbf3a"/></svg></button>
   <button class="run" aria-label="Outlook"><svg width="13" height="12" viewBox="0 0 13 12"><path d="M0 1l7-1v11l-7-1z" fill="#1069b8"/><path d="M7 2h6v5H7z" fill="#4b97d6"/><circle cx="3.500" cy="5.500" r="1.700" fill="none" stroke="#fff"/><path d="M5 7h8v5H5z" fill="#f3c98a"/><path d="M5 7l4 3 4-3" fill="none" stroke="#b8823a"/></svg></button>
   <button class="run" aria-label="Acrobat"><svg width="12" height="12" viewBox="0 0 12 12"><path d="M.5.5h11v11H.5z" fill="#2a0606" stroke="#a01c14"/><path d="M2.500 9q4-3 3.500-6 0 4 4 4-4-1-7.500 2z" fill="none" stroke="#eee"/></svg></button>
   <button class="run" aria-label="PowerPoint"><svg width="12" height="12" viewBox="0 0 12 12"><path d="M6 2h6v8H6z" fill="#f3d0c6"/><path d="M0 1l7-1v12l-7-1z" fill="#d24625"/><path d="M2.500 9V3.500h1.500q1.500 0 1.500 1.500T4 6.500H2.500M8 5h3M8 7h3" fill="none" stroke="#fff"/></svg></button>
   <button class="cur" aria-label="Magnet Office"><svg width="13" height="13"><use href="#i-scan"/></svg></button>
  </div>
  <div class="tray d-flex align-items-center ms-auto">
   <svg width="7" height="5" viewBox="0 0 7 5"><path d="M.5 4.500l3-3 3 3" fill="none" stroke="#eee"/></svg>
   <svg width="9" height="6" viewBox="0 0 9 6"><path d="M2 1h7v5H2zM0 0h3v3H0z" fill="#ddd"/></svg>
   <svg width="7" height="7" viewBox="0 0 7 7"><path d="M0 7L7 0v7z" fill="#666"/><path d="M2 6.500q0-4 4.500-4.500M4.500 6.500q0-2 2-2" fill="none" stroke="#ddd"/></svg>
   <svg width="9" height="7" viewBox="0 0 9 7"><path d="M.5 2.500h1l2-2v6l-2-2h-1zM5.500 2q1 1.500 0 3M7.500 1q1.500 2.500 0 5" fill="none" stroke="#ddd"/></svg>
   <span>DEU</span><span class="text-center px-1">2:34 PM<br>5/11/2017</span>
   <svg class="ms-1" width="13" height="12" viewBox="0 0 13 12"><path d="M0 0h9v7H4L2 9V7H0z" fill="#fff"/><path d="M2 2.500h5M2 4.500h4" stroke="#333"/><circle cx="9" cy="8.500" r="3.300" fill="#333" stroke="#ddd"/><path d="M8 7.500q1-1.500 2 0L8 10h2.500" fill="none" stroke="#fff" stroke-width=".8"/></svg>
  </div>
 </div>
</footer>
<script>
// Rulers: one tick per 10 drawing units, a long tick with its value per 100.
const STEP = 17.3, NS = 'http://www.w3.org/2000/svg';
function add(svg, name, attrs, text) {
  const el = document.createElementNS(NS, name);
  for (const k in attrs) el.setAttribute(k, attrs[k]);
  if (text !== undefined) el.textContent = text;
  svg.append(el);
}
const h = document.getElementById('ruleH'), v = document.getElementById('ruleV');
for (let i = -15; i <= 39; i++) {
  const x = Math.round(276 + i * STEP) + 0.5;
  const long = i % 10 === 0;
  if (x > 12) add(h, 'path', {d: `M${x} 1v${long ? 8 : 2}`, stroke: '#777'});
  if (long && x > 12) add(h, 'text', {x: x + 1, y: 8, class: 'tick-label'}, i * 10);
}
add(h, 'path', {d: 'M9.500 0v11M3.500 4v4h4', stroke: '#777', fill: 'none'});
for (let i = -2; i <= 21; i++) {
  const y = Math.round(364 - i * STEP) + 0.5;
  const long = i % 10 === 0;
  add(v, 'path', {d: `M${long ? 1 : 7} ${y}H9`, stroke: '#777'});
  if (long) add(v, 'text', {transform: `translate(6 ${y - 1}) rotate(-90)`, class: 'tick-label'}, i * 10);
}
</script>
</body>
</html>
